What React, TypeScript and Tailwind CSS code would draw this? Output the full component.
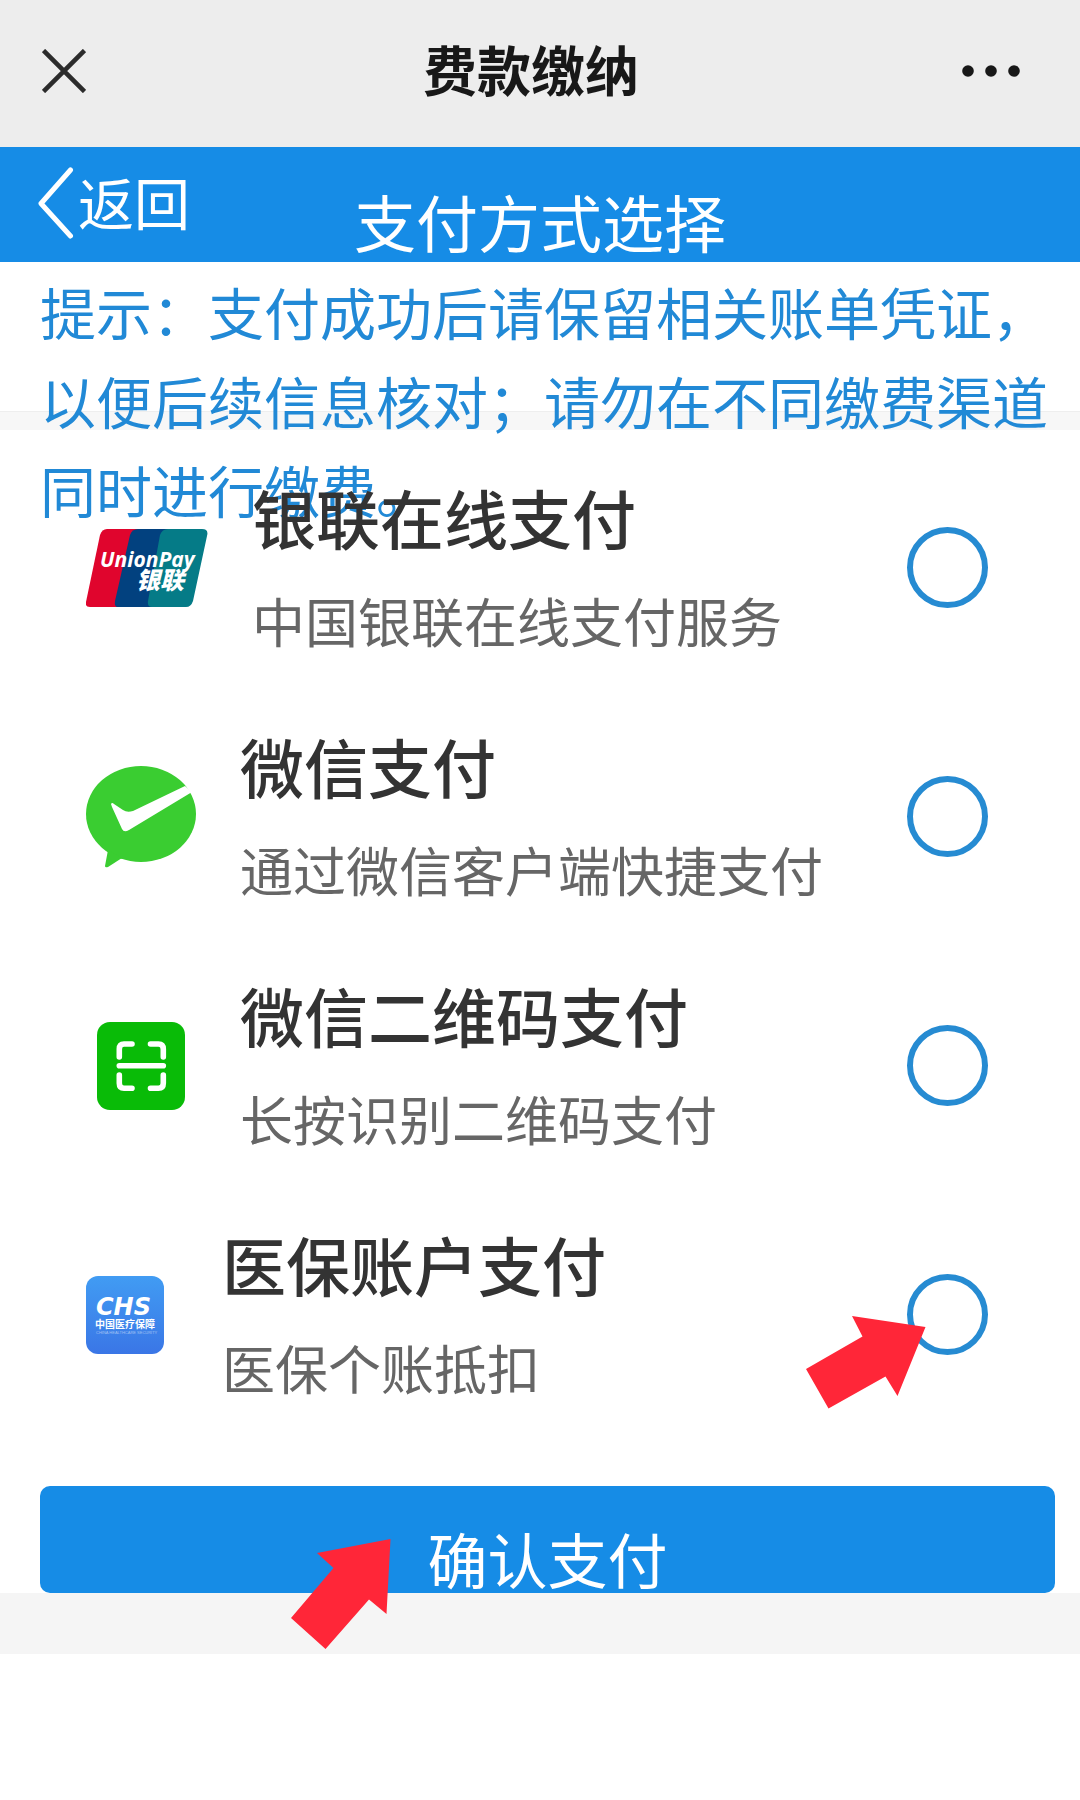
import { useState } from 'react';
import type { ReactNode } from 'react';

interface PayMethod {
  id: string;
  title: string;
  desc: string;
  icon: ReactNode;
  hint?: boolean;
}

function UnionPayIcon() {
  return (
    <svg width="122" height="78" viewBox="0 0 122 78" className="shrink-0" aria-hidden="true">
      <path d="M21 0H60L40 78H4Q-1 78 0 73L14 6Q16 0 21 0Z" fill="#e0052d" />
      <path d="M52 0H90L72 78H32Q28 78 29 72L44 6Q46 0 52 0Z" fill="#02417f" />
      <path d="M82 0H116Q123 0 121 7L107 72Q105 78 100 78H66Q61 78 62 72L74 6Q76 0 82 0Z" fill="#057b87" />
      <text x="14" y="38" fill="#fff" className="font-['Open_Sans'] text-[21px] font-bold italic">
        UnionPay
      </text>
      <text x="50" y="60" fill="#fff" className="text-[24px] font-black italic">
        银联
      </text>
    </svg>
  );
}

function WechatPayIcon() {
  return (
    <svg width="110" height="102" viewBox="0 0 110 102" className="shrink-0" aria-hidden="true">
      <ellipse cx="55" cy="48" rx="55" ry="48" fill="#3acd31" />
      <path d="M22 84L19 100Q19 102 22 101L36 92Z" fill="#3acd31" />
      <path
        d="M25 38Q26 36 28 38L37 44Q41 47 47 45L99 20L106 26L43 64Q38 67 36 63L26 41Z"
        fill="#fff"
      />
    </svg>
  );
}

function ScanIcon() {
  return (
    <svg width="110" height="88" viewBox="0 0 110 88" className="shrink-0" aria-hidden="true">
      <rect x="11" width="88" height="88" rx="13" fill="#09bb07" />
      <g fill="none" stroke="#fff" strokeWidth="5.6" strokeLinecap="round">
        <path d="M46 22H38Q33.300 22 33.300 27V35" />
        <path d="M64.500 22H72.500Q77.300 22 77.300 27V35" />
        <path d="M33.300 53V61.300Q33.300 66.300 38 66.300H46" />
        <path d="M77.300 53V61.300Q77.300 66.300 72.500 66.300H64.500" />
        <path d="M33.300 43.700H77.300" />
      </g>
    </svg>
  );
}

function ChsIcon() {
  return (
    <svg width="92" height="78" viewBox="0 0 92 78" className="shrink-0" aria-hidden="true">
      <defs>
        <linearGradient id="chs" x1="0" y1="0" x2="0" y2="1">
          <stop offset="0" stopColor="#419cf3" />
          <stop offset="1" stopColor="#3a76e6" />
        </linearGradient>
      </defs>
      <rect width="78" height="78" rx="12" fill="url(#chs)" />
      <text x="10" y="39" fill="#fff" className="font-['DejaVu_Sans'] text-[24px] font-bold italic">
        CHS
      </text>
      <text x="9" y="52" fill="#fff" className="text-[10px] font-bold">
        中国医疗保障
      </text>
      <text x="10" y="58" fill="#fff" fillOpacity="0.5" className="font-['Liberation_Sans'] text-[4px]">
        CHINA HEALTHCARE SECURITY
      </text>
    </svg>
  );
}

const methods: PayMethod[] = [
  { id: 'unionpay', title: '银联在线支付', desc: '中国银联在线支付服务', icon: <UnionPayIcon /> },
  { id: 'wechat', title: '微信支付', desc: '通过微信客户端快捷支付', icon: <WechatPayIcon /> },
  { id: 'wechat-qr', title: '微信二维码支付', desc: '长按识别二维码支付', icon: <ScanIcon /> },
  { id: 'chs', title: '医保账户支付', desc: '医保个账抵扣', icon: <ChsIcon />, hint: true },
];

export default function App() {
  const [selected, setSelected] = useState('');

  return (
    <div className="min-h-screen bg-white font-['Noto_Sans_CJK_SC',sans-serif]">
      {/* WeChat title bar */}
      <header className="grid h-[147px] grid-cols-[1fr_auto_1fr] items-center bg-[#ededed] pr-[60px] pb-[6px] pl-[42px] text-[#181818]">
        <button type="button" aria-label="关闭" className="justify-self-start">
          <svg width="44" height="44" viewBox="0 0 44 44" fill="none" stroke="#2b2b2b" strokeWidth="4.600">
            <path d="M1.500 1.500L42.500 42.500M42.500 1.500L1.500 42.500" />
          </svg>
        </button>
        <h1 className="pb-1 text-[54px] leading-none font-bold">费款缴纳</h1>
        <button type="button" aria-label="更多" className="justify-self-end">
          <svg width="58" height="12" viewBox="0 0 58 12" fill="currentColor">
            <circle cx="6" cy="6" r="5.800" />
            <circle cx="29" cy="6" r="5.800" />
            <circle cx="52" cy="6" r="5.800" />
          </svg>
        </button>
      </header>

      <nav className="grid h-[115px] grid-cols-[1fr_auto_1fr] items-center bg-[#168ce6] px-9 text-white">
        <a href="#back" className="flex items-center gap-1 pb-2 text-[56px] leading-none">
          <svg width="38" height="76" viewBox="0 0 38 76" fill="none" stroke="#fff" strokeWidth="5" strokeLinecap="round" strokeLinejoin="round">
            <path d="M34.500 7L5 40.500L34.500 73" />
          </svg>
          返回
        </a>
        <h2 className="pt-8 text-[62px] leading-none">支付方式选择</h2>
      </nav>

      {/* the notice is taller than its bar and runs over the list */}
      <div className="h-[149px] pt-1 pr-5 pl-10">
        <p className="text-[56px] leading-[89px] text-[#2189d6]">
          提示：支付成功后请保留相关账单凭证，以便后续信息核对；请勿在不同缴费渠道同时进行缴费。
        </p>
      </div>
      <div className="h-[19px] border-t border-[#eeeeee] bg-[#f7f7f7]" />

      <form className="pt-[13px]" onSubmit={(e) => e.preventDefault()}>
        {methods.map((m) => (
          <label key={m.id} className="flex h-[249px] items-center gap-11 pr-[92px] pl-[86px]">
            {m.icon}
            <span className="flex flex-1 flex-col gap-2">
              <span className="text-[64px] leading-[96px] font-medium text-[#333333]">{m.title}</span>
              <span className="text-[53px] leading-[96px] text-[#666666]">{m.desc}</span>
            </span>
            <span className="relative flex">
              <input
                type="radio"
                name="pay"
                value={m.id}
                checked={selected === m.id}
                onChange={() => setSelected(m.id)}
                className="size-[81px] appearance-none rounded-full border-6 border-[#268bd2] checked:bg-[#268bd2]"
              />
              {m.hint && (
                <svg width="120" height="93" viewBox="0 0 120 93" className="pointer-events-none absolute top-[42px] right-[62px]" fill="#ff2638" aria-hidden="true">
                  <path d="M0 53L56.500 20.500L46 0L119.500 11L91.500 80L79.500 60.500L22.500 92.500Z" />
                </svg>
              )}
            </span>
          </label>
        ))}

        <div className="relative mt-[47px] mr-[25px] ml-10">
          <button type="submit" className="flex h-[107px] w-full items-center justify-center rounded-[10px] bg-[#168ce6] pt-9 text-[60px] leading-none text-white">
            确认支付
          </button>
          <svg width="100" height="112" viewBox="0 0 100 112" className="pointer-events-none absolute top-[52px] left-[251px]" fill="#ff2638" aria-hidden="true">
            <path d="M0 80L42.500 30L26 15L99.500 1L95.500 76L78 61.500L34.500 111Z" />
          </svg>
        </div>
      </form>
      <div className="h-[61px] bg-[#f5f5f5]" />
    </div>
  );
}
